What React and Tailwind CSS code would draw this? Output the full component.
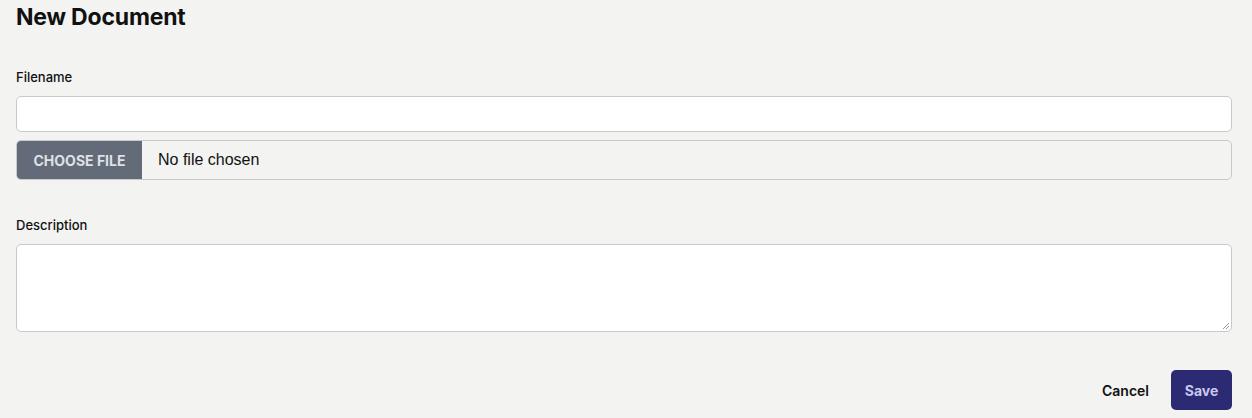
import React from "react";

export default function App() {
  return (
    <div className="min-h-[418px] w-full bg-[#f3f3f2] pl-4 pr-5 text-[#111] [font-family:Inter,'Liberation_Sans',sans-serif]">
      <h1 className="pt-[3px] text-[23px] font-bold leading-[28px] tracking-[-0.2px]">New Document</h1>
      <div className="mt-[36px] text-[13px] font-medium leading-[20px]">Filename</div>
      <div className="mt-[9px] h-[36px] rounded-[5px] border border-[#c9c9c9] bg-white"></div>
      <div className="mt-[8px] flex h-[40px] overflow-hidden rounded-[5px] border border-[#c9c9c9] bg-[#f3f3f2]">
        <div className="flex w-[125px] items-center justify-center bg-[#636b78] text-[14px] font-bold text-[#dfe1e6]">CHOOSE FILE</div>
        <div className="flex items-center pl-4 text-[16px] text-[#111] [font-family:'Liberation_Sans',sans-serif]">No file chosen</div>
      </div>
      <div className="mt-[35px] text-[13px] font-medium leading-[20px]">Description</div>
      <div className="relative mt-[9px] h-[88px] rounded-[5px] border border-[#c9c9c9] bg-white">
        <svg className="absolute bottom-[1px] right-[1px]" width="9" height="9" viewBox="0 0 9 9">
          <path d="M8 2 L2 8 M8 5 L5 8" stroke="#999" strokeWidth="1" fill="none" />
        </svg>
      </div>
      <div className="mt-[38px] flex items-center justify-end gap-[22px] pb-2">
        <button className="text-[14px] font-semibold text-[#111]">Cancel</button>
        <button className="h-[40px] w-[61px] rounded-[5px] bg-[#2c2a72] text-[14px] font-bold text-[#c9c8ee]">Save</button>
      </div>
    </div>
  );
}
